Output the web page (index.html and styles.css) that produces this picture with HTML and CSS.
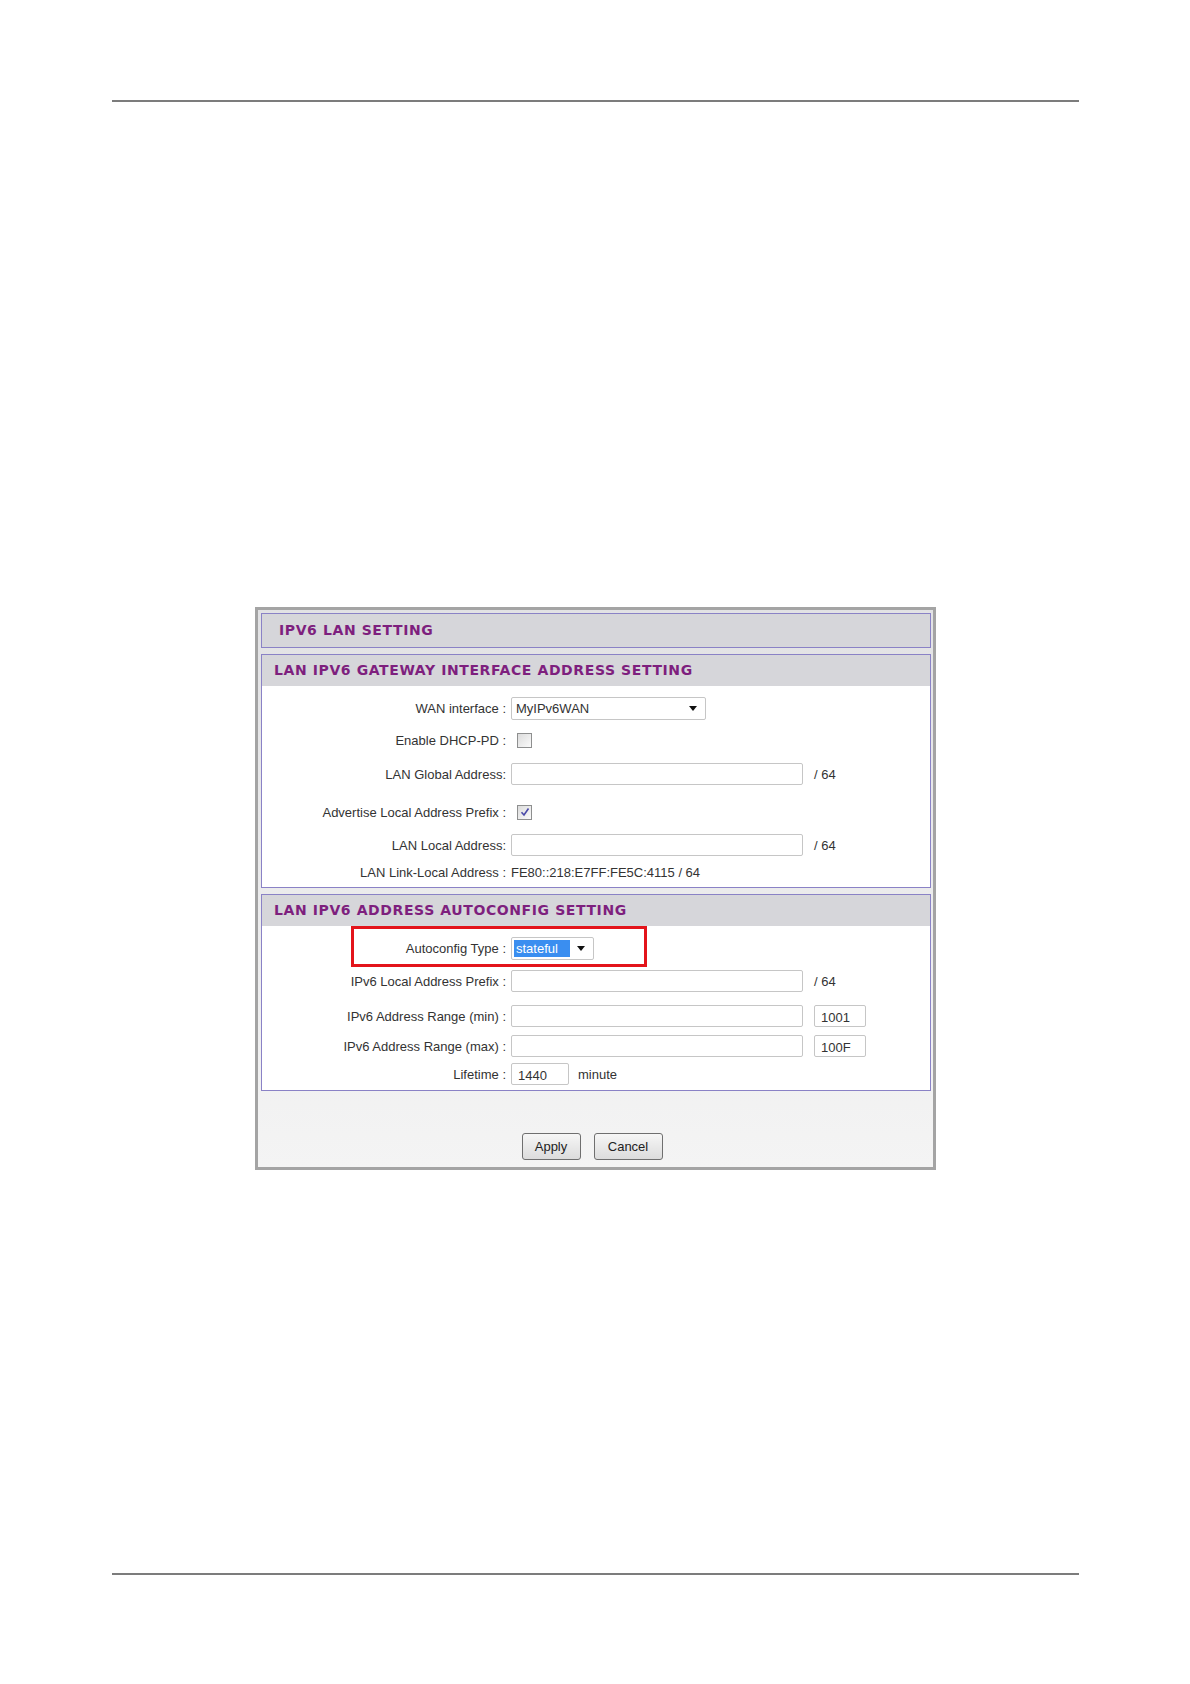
FILE: index.html
```html
<!DOCTYPE html>
<html lang="en">
<head>
    <meta charset="UTF-8">
    <title>IPv6 LAN Setting</title>
    <link rel="stylesheet" href="styles.css">
</head>
<body>
    <div class="page">
        <div class="rule"></div>

        <div class="panel">
            <div class="box title-box">
                <div class="head main-head">IPV6 LAN SETTING</div>
            </div>

            <div class="box">
                <div class="head">LAN IPV6 GATEWAY INTERFACE ADDRESS SETTING</div>
                <div class="body body-gw">
                    <div class="row h30">
                        <span class="label">WAN interface :</span>
                        <div class="select wan"><span>MyIPv6WAN</span><i class="arrow"></i></div>
                    </div>
                    <div class="row h34">
                        <span class="label">Enable DHCP-PD :</span>
                        <span class="check"></span>
                    </div>
                    <div class="row h34">
                        <span class="label">LAN Global Address:</span>
                        <span class="input wide"></span>
                        <span class="suffix">/ 64</span>
                    </div>
                    <div class="row h42">
                        <span class="label">Advertise Local Address Prefix :</span>
                        <span class="check checked">
                            <svg viewBox="0 0 12 12" width="12" height="12"><path d="M2.5 6.2 L5 9 L9.5 2.5" fill="none" stroke="#4a4aa8" stroke-width="1.6"/></svg>
                        </span>
                    </div>
                    <div class="row h24">
                        <span class="label">LAN Local Address:</span>
                        <span class="input wide"></span>
                        <span class="suffix">/ 64</span>
                    </div>
                    <div class="row h30">
                        <span class="label">LAN Link-Local Address :</span>
                        <span class="value">FE80::218:E7FF:FE5C:4115 / 64</span>
                    </div>
                </div>
            </div>

            <div class="box">
                <div class="head">LAN IPV6 ADDRESS AUTOCONFIG SETTING</div>
                <div class="body body-auto">
                    <div class="mark"></div>
                    <div class="row h32">
                        <span class="label">Autoconfig Type :</span>
                        <div class="select type"><span class="picked">stateful</span><i class="arrow"></i></div>
                    </div>
                    <div class="row h34">
                        <span class="label">IPv6 Local Address Prefix :</span>
                        <span class="input wide"></span>
                        <span class="suffix">/ 64</span>
                    </div>
                    <div class="row h36">
                        <span class="label">IPv6 Address Range (min) :</span>
                        <span class="input wide"></span>
                        <span class="input short">1001</span>
                    </div>
                    <div class="row h24">
                        <span class="label">IPv6 Address Range (max) :</span>
                        <span class="input wide"></span>
                        <span class="input short">100F</span>
                    </div>
                    <div class="row h32">
                        <span class="label">Lifetime :</span>
                        <span class="input life">1440</span>
                        <span class="unit">minute</span>
                    </div>
                </div>
            </div>

            <div class="actions">
                <button class="btn apply">Apply</button>
                <button class="btn cancel">Cancel</button>
            </div>
        </div>

        <div class="rule bottom-rule"></div>
    </div>
</body>
</html>
```

FILE: styles.css
```css
body {
    margin: 0;
    background: #ffffff;
    font-family: 'Liberation Sans', Arial, sans-serif;
    color: #333;
}

.page {
    padding-top: 100px;
}

.rule {
    margin-left: 112px;
    width: 967px;
    height: 0;
    border-top: 2px solid #7c7c7c;
}

.bottom-rule {
    margin-top: 403px;
}

.panel {
    position: relative;
    margin: 505px 0 0 255px;
    width: 670px;
    height: 554px;
    border: 3px solid #a4a4a4;
    padding: 3px 2px 0 3px;
    background: linear-gradient(#e2e2e4, #f4f4f4);
    display: flex;
    flex-direction: column;
    gap: 6px;
}

.box {
    box-sizing: border-box;
    border: 1px solid #8a82c6;
    background: #ffffff;
    width: 100%;
}

.title-box {
    background: #d6d6da;
    height: 35px;
    display: flex;
    align-items: center;
}

.head {
    font-family: 'DejaVu Sans', Verdana, sans-serif;
    font-weight: bold;
    font-size: 14px;
    letter-spacing: 0.6px;
    color: #7e1f7e;
    background: #d6d6da;
    height: 31px;
    line-height: 31px;
    padding-left: 12px;
}

.main-head {
    padding-left: 17px;
    line-height: 33px;
    height: 33px;
}

.body {
    position: relative;
    font-size: 13px;
}

.body-gw {
    padding-top: 7px;
}

.body-auto {
    padding-top: 6px;
}

.row {
    display: flex;
    align-items: center;
}

.h24 { height: 24px; }
.h30 { height: 30px; }
.h32 { height: 32px; }
.h34 { height: 34px; }
.h36 { height: 36px; }
.h42 { height: 42px; }

.label {
    width: 244px;
    text-align: right;
    padding-right: 5px;
    white-space: nowrap;
}

.value {
    white-space: nowrap;
}

.input {
    display: inline-block;
    box-sizing: border-box;
    height: 22px;
    border: 1px solid #c6c6c6;
    border-radius: 2px;
    background: #fff;
    line-height: 20px;
    padding-left: 6px;
    font-size: 13px;
}

.wide {
    width: 292px;
}

.short {
    width: 52px;
    margin-left: 11px;
    padding-top: 2px;
}

.life {
    width: 58px;
    padding-top: 2px;
}

.suffix {
    margin-left: 11px;
}

.unit {
    margin-left: 9px;
}

.select {
    box-sizing: border-box;
    height: 23px;
    border: 1px solid #c6c6c6;
    border-radius: 2px;
    background: #fff;
    display: flex;
    align-items: center;
    justify-content: space-between;
    padding: 0 8px 0 4px;
}

.wan {
    width: 195px;
}

.type {
    width: 83px;
    padding-left: 2px;
}

.picked {
    background: #3a8ef0;
    color: #fff;
    padding: 1px 12px 1px 2px;
}

.arrow {
    width: 0;
    height: 0;
    border-left: 4px solid transparent;
    border-right: 4px solid transparent;
    border-top: 5px solid #111;
}

.check {
    box-sizing: border-box;
    width: 15px;
    height: 15px;
    margin-left: 6px;
    border: 1px solid #8e8f8f;
    background: linear-gradient(135deg, #dcdcdc, #fafafa);
    display: flex;
    align-items: center;
    justify-content: center;
}

.mark {
    position: absolute;
    left: 89px;
    top: 0;
    width: 290px;
    height: 35px;
    border: 3px solid #e3141b;
}

.actions {
    display: flex;
    justify-content: center;
    gap: 13px;
    padding: 36px 8px 0 0;
}

.btn {
    height: 27px;
    font-family: 'Liberation Sans', Arial, sans-serif;
    font-size: 13px;
    color: #222;
    border: 1px solid #6f6f6f;
    border-radius: 3px;
    background: linear-gradient(#f6f6f6, #dcdcdc);
    padding: 0;
}

.apply { width: 59px; }
.cancel { width: 69px; }
```
